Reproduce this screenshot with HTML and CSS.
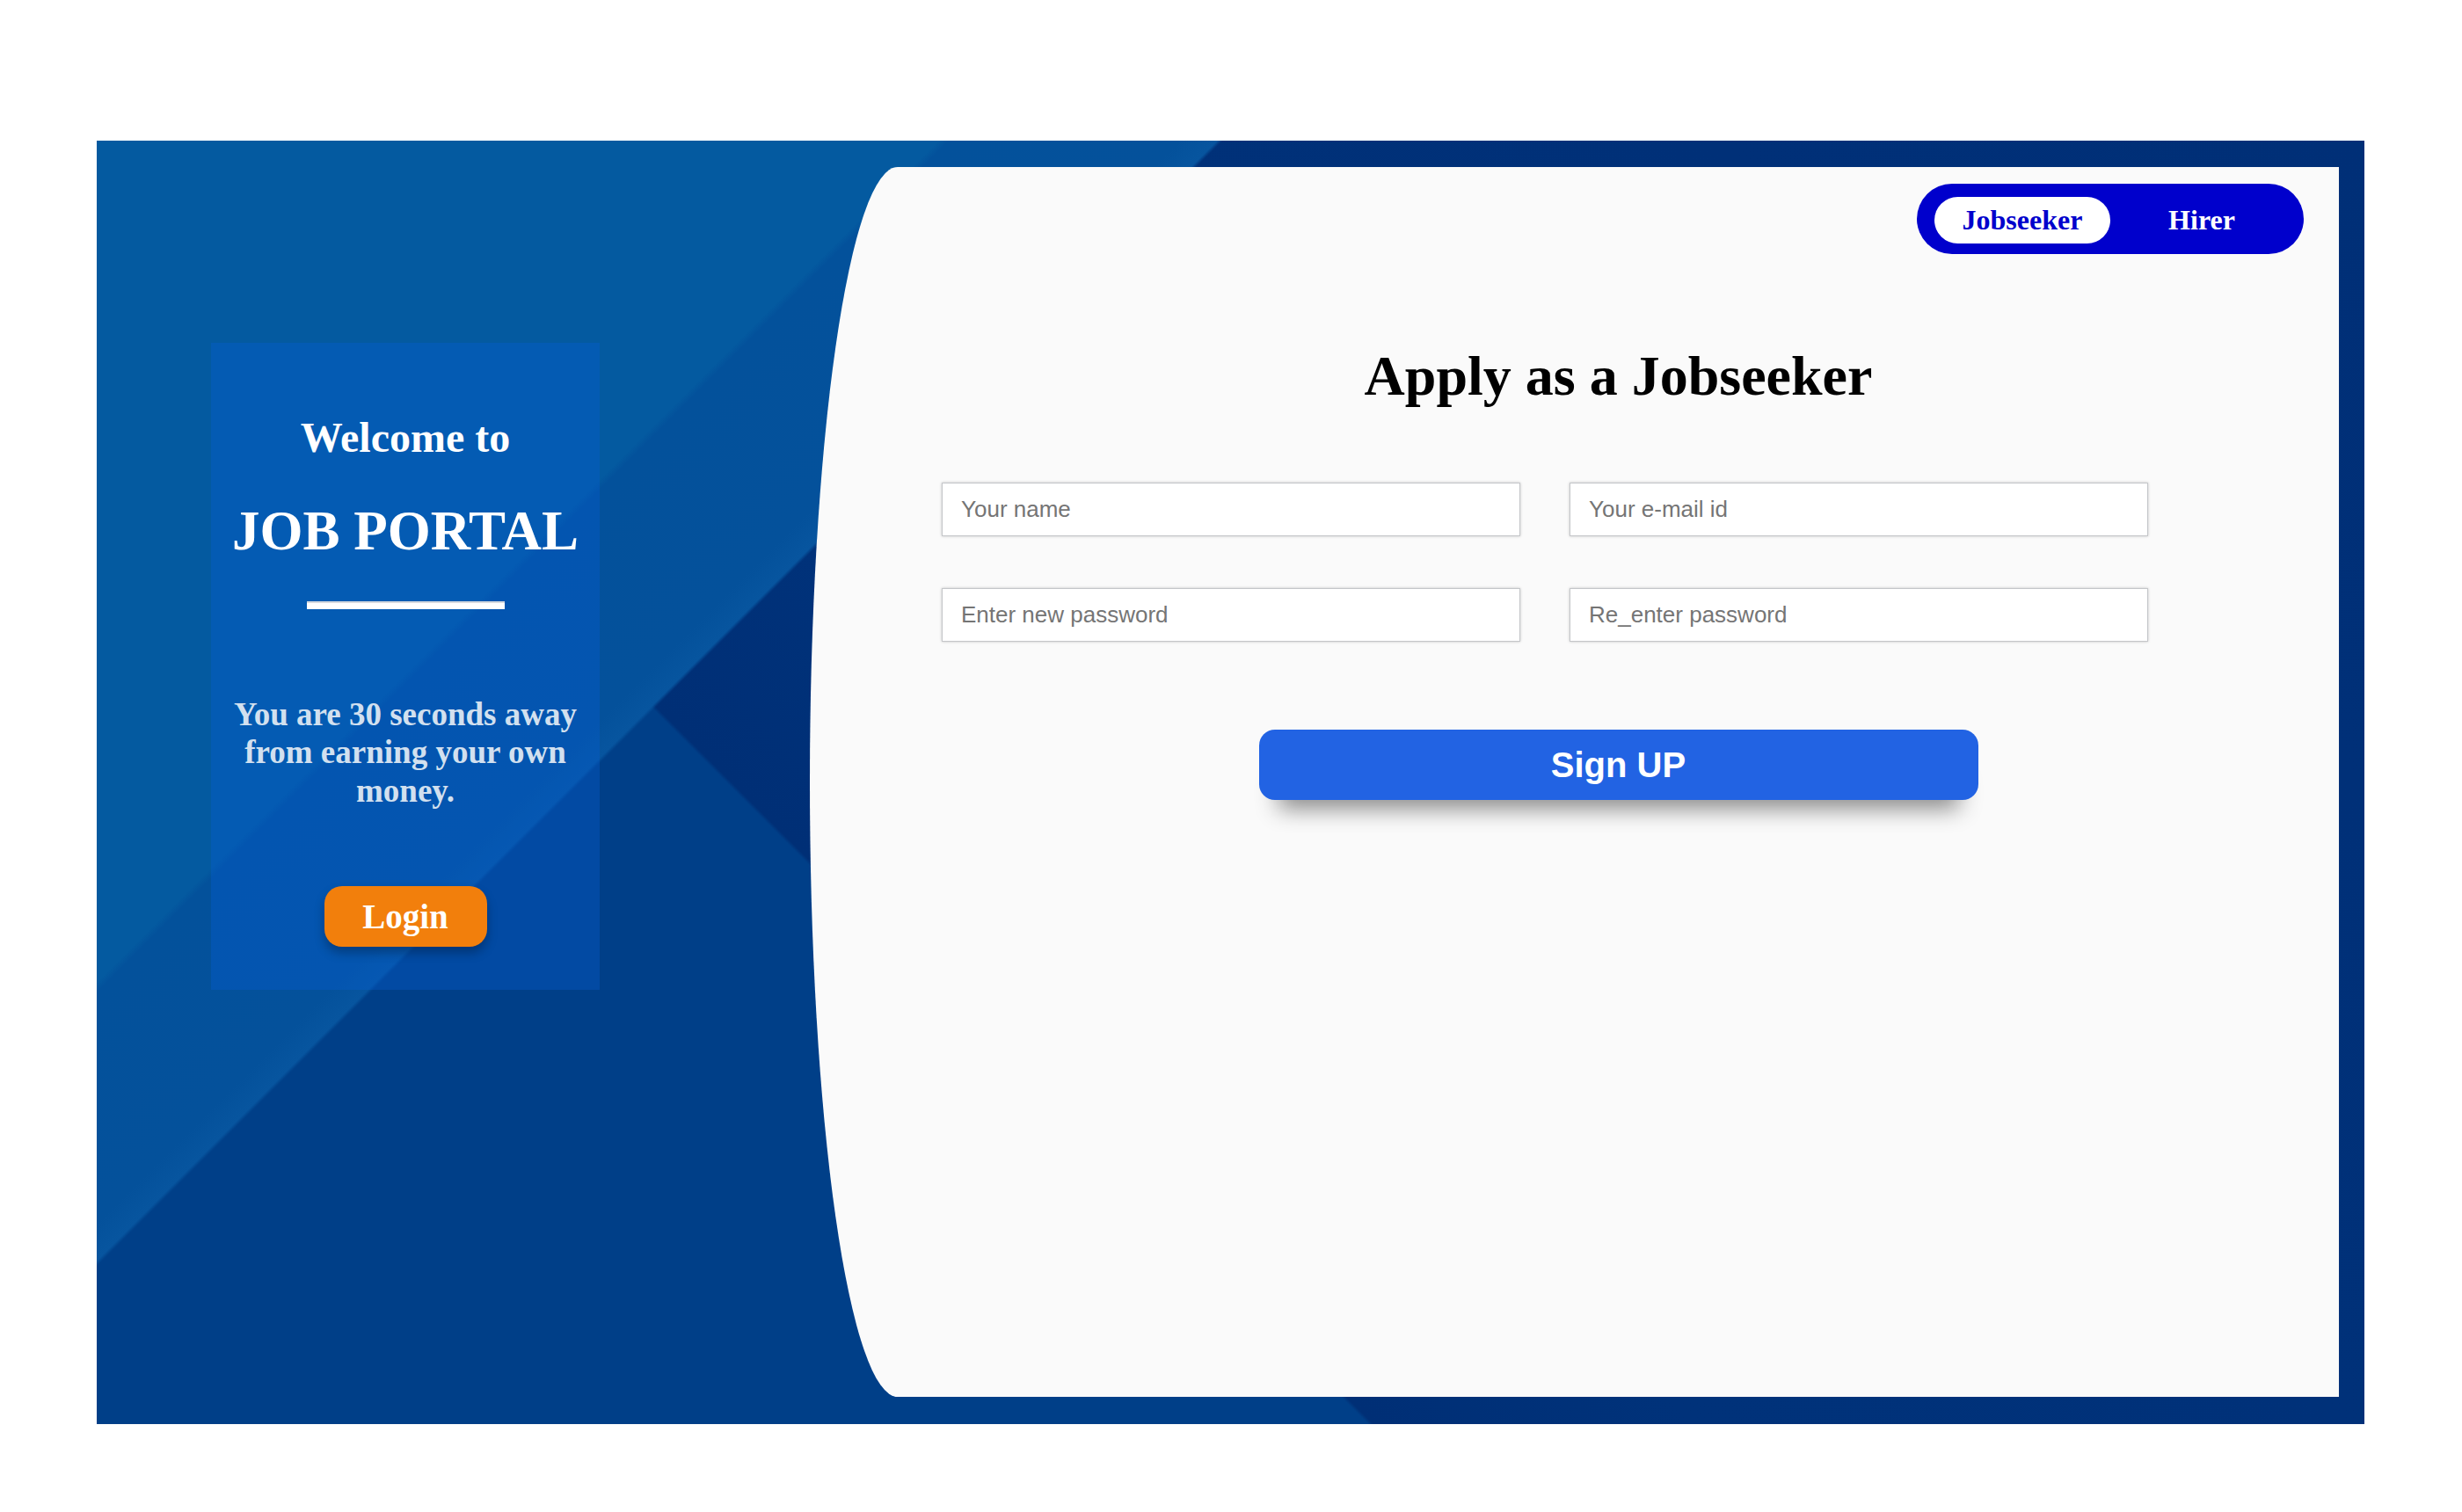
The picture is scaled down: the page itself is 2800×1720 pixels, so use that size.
FILE: index.html
```html
<!DOCTYPE html>
<html lang="en">
<head>
<meta charset="utf-8">
<title>Job Portal – Sign up</title>
<link rel="stylesheet" href="styles.css">
</head>
<body>
<main class="frame">
  <aside class="intro">
    <div class="intro-card">
      <h2 class="welcome">Welcome to</h2>
      <h1 class="brand">JOB PORTAL</h1>
      <div class="rule"></div>
      <p class="tagline">You are 30 seconds away from earning your own money.</p>
      <button class="login-btn" type="button">Login</button>
    </div>
  </aside>
  <section class="panel">
    <div class="toggle">
      <button class="toggle-btn active" type="button">Jobseeker</button>
      <button class="toggle-btn" type="button">Hirer</button>
    </div>
    <h1 class="title">Apply as a Jobseeker</h1>
    <form class="signup">
      <div class="fields">
        <input class="field" type="text" placeholder="Your name">
        <input class="field" type="email" placeholder="Your e-mail id">
        <input class="field" type="password" placeholder="Enter new password">
        <input class="field" type="password" placeholder="Re_enter password">
      </div>
      <button class="signup-btn" type="button">Sign UP</button>
    </form>
  </section>
</main>
</body>
</html>
```

FILE: styles.css
```css
* {
  box-sizing: border-box;
}

html,
body {
  margin: 0;
  background: #ffffff;
}

.frame {
  display: flex;
  width: 2579px;
  height: 1460px;
  margin: 160px 0 0 110px;
  padding: 30px 29px 31px 0;
  background:
    linear-gradient(135deg,
      #045aa0 0%,
      #045aa0 23.7%,
      #03519b 24%,
      #04519b 30.5%,
      #07559f 31.55%,
      rgba(0, 0, 0, 0) 31.7%),
    linear-gradient(45deg,
      #003f88 0%,
      #003f88 35.8%,
      #002f76 35.95%,
      #00327a 45%,
      #002f77 100%);
}

/* ---------- left column ---------- */

.intro {
  width: 811px;
  flex: none;
  padding: 200px 0 0 130px;
}

.intro-card {
  width: 442px;
  height: 736px;
  padding: 80px 20px 0;
  display: flex;
  flex-direction: column;
  align-items: center;
  text-align: center;
  background: rgba(5, 95, 215, 0.35);
  font-family: "Liberation Serif", "Times New Roman", serif;
  color: #ffffff;
}

.welcome {
  margin: 0;
  font-size: 48px;
  line-height: 56px;
  font-weight: 700;
}

.brand {
  margin: 42px 0 0;
  font-size: 63px;
  line-height: 72px;
  font-weight: 700;
  white-space: nowrap;
}

.rule {
  margin-top: 44px;
  width: 225px;
  height: 9px;
  background: #ffffff;
  box-shadow: inset 0 2px 0 #d6d9de;
}

.tagline {
  margin: 98px 0 0;
  font-size: 37px;
  line-height: 43.3px;
  font-weight: 700;
  color: #d2e0ef;
}

.login-btn {
  margin-top: 87px;
  width: 185px;
  height: 69px;
  border: none;
  border-radius: 20px;
  background: #f27f0c;
  color: #ffffff;
  font-family: "Liberation Serif", "Times New Roman", serif;
  font-size: 39px;
  font-weight: 700;
  padding: 0;
  box-shadow: 0 7px 12px rgba(0, 0, 0, 0.28);
}

/* ---------- right panel ---------- */

.panel {
  flex: 1;
  display: flex;
  flex-direction: column;
  padding-left: 100px;
  background: #fafafa;
  border-radius: 100px 0 0 100px / 50% 0 0 50%;
}

.toggle {
  align-self: flex-end;
  margin: 19px 40px 0 0;
  width: 440px;
  height: 80px;
  padding: 15px 20px 12px;
  display: flex;
  background: #0000cc;
  border-radius: 40px;
}

.toggle-btn {
  width: 200px;
  height: 53px;
  padding: 0;
  border: none;
  border-radius: 27px;
  background: transparent;
  color: #ffffff;
  font-family: "Liberation Serif", "Times New Roman", serif;
  font-size: 32px;
  font-weight: 700;
}

.toggle-btn + .toggle-btn {
  padding-left: 8px;
}

.toggle-btn.active {
  background: #ffffff;
  color: #0000cc;
}

.title {
  margin: 102px 0 0;
  text-align: center;
  font-family: "Liberation Serif", "Times New Roman", serif;
  font-size: 64px;
  line-height: 74px;
  font-weight: 700;
  color: #000000;
}

.signup {
  margin: 84px 0 0;
}

.fields {
  display: grid;
  grid-template-columns: 658px 658px;
  column-gap: 56px;
  row-gap: 59px;
  margin-left: 50px;
}

.field {
  height: 61px;
  padding: 0 21px;
  border: 1px solid #c4c6c9;
  box-shadow: 0 0 3px rgba(0, 0, 0, 0.22);
  background: #ffffff;
  font-family: "Liberation Sans", Arial, sans-serif;
  font-size: 26px;
  color: #333333;
  outline: none;
}

.field::placeholder {
  color: #757575;
}

.signup-btn {
  display: block;
  margin: 100px auto 0;
  width: 818px;
  height: 80px;
  padding: 0;
  border: none;
  border-radius: 18px;
  background: #2263e3;
  color: #ffffff;
  font-family: "Liberation Sans", Arial, sans-serif;
  font-size: 40px;
  font-weight: 700;
  box-shadow: 0 32px 26px -22px rgba(0, 0, 0, 0.45);
}
```
